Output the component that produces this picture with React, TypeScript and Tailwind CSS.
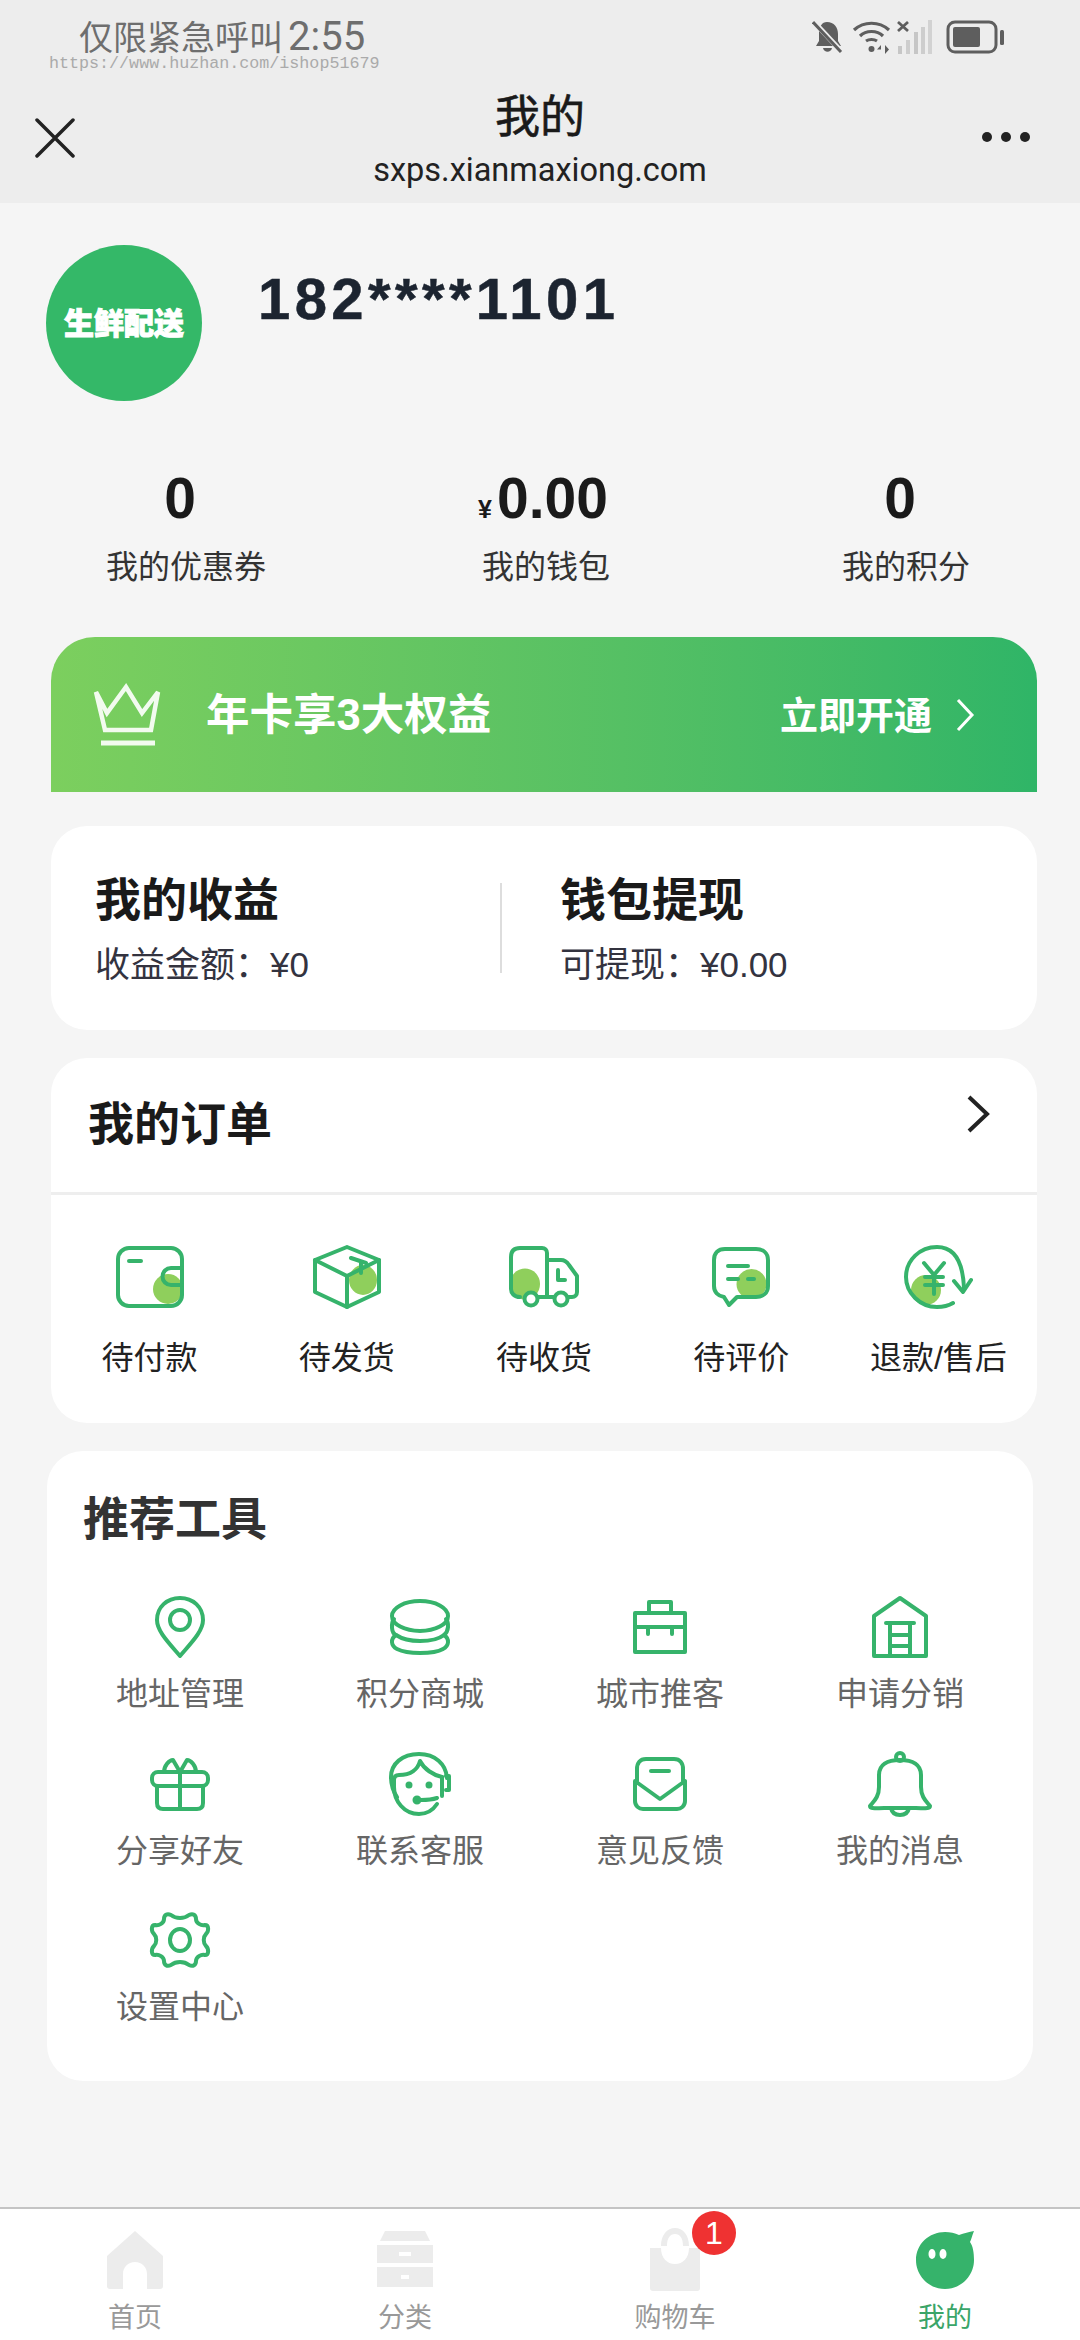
const G = "#36b36b";
const L = "#8fcf5c";
const CJK = "[font-family:'Liberation_Sans','Noto_Sans_CJK_SC',sans-serif]";

function Ic({ w, h, children }: { w: number; h: number; children: React.ReactNode }) {
  return (
    <svg width={w} height={h} viewBox={`0 0 ${w} ${h}`} fill="none" stroke={G} strokeWidth={4} strokeLinecap="round" strokeLinejoin="round">
      {children}
    </svg>
  );
}

const orderIcons = [
  <Ic w={68} h={62} key="a">
    <circle cx={52} cy={43} r={15} fill={L} stroke="none" />
    <rect x={2} y={2} width={64} height={58} rx={11} />
    <path d="M13 15H25" />
    <path d="M66 22H55a8.5 8.5 0 0 0 0 17H66" />
  </Ic>,
  <Ic w={70} h={64} key="b">
    <ellipse cx={51} cy={35} rx={14} ry={15} fill={L} stroke="none" />
    <path d="M35 2L67 15V47L35 62L3 47V15Z" />
    <path d="M3 15L35 31L67 15M35 31V62" />
    <path d="M39 13L54 18M49 17V28" />
  </Ic>,
  <Ic w={70} h={62} key="c">
    <ellipse cx={16} cy={38} rx={15} ry={15.5} fill={L} stroke="none" />
    <path d="M11 51C5 51 2 47 2 43V11C2 5 5 2 11 2H33C36 2 38 4 38 7V51M38 14H52C56 14 58 16 60 19L68 30V46C68 49 66 51 63 51H59M45 51H27" />
    <path d="M49 24V34H56" />
    <circle cx={22} cy={53} r={6.5} fill="#fff" />
    <circle cx={52} cy={53} r={6.5} fill="#fff" />
  </Ic>,
  <Ic w={58} h={60} key="d">
    <circle cx={39.5} cy={37} r={15} fill={L} stroke="none" />
    <path d="M13 2H44C51 2 56 6 56 13V39C56 46 51 50 44 50H25L17 58L12 50C6 49 2 45 2 39V13C2 6 6 2 13 2Z" />
    <path d="M16 19H36M16 32H26" />
    <path d="M36 32H42" />
  </Ic>,
  <Ic w={70} h={64} key="e">
    <circle cx={23} cy={45} r={15} fill={L} stroke="none" />
    <path d="M50 58C45 61 40 62 34 62C17 62 3 48 3 32C3 15 17 2 34 2C50 2 60 14 61 44" />
    <path d="M51 36L60 47L68 35" />
    <path d="M21 18L31 30L41 18M31 30V49M22 32H40M22 40H40" />
  </Ic>,
];

const toolIcons = [
  <Ic w={52} h={62} key="1">
    <path d="M26 60C14 46 3 35 3 24C3 11 13 2 26 2C39 2 49 11 49 24C49 35 38 46 26 60Z" />
    <circle cx={26} cy={24} r={10} />
  </Ic>,
  <Ic w={62} h={56} key="2">
    <ellipse cx={31} cy={17} rx={28} ry={15} />
    <path d="M5 20C2 24 2 34 7 36C13 40 23 42 31 42C40 42 50 40 55 36C60 32 60 24 57 20" />
    <path d="M7 36C1 40 2 47 8 50C14 53 22 54 31 54C40 54 49 53 54 50C60 47 61 40 55 36" />
  </Ic>,
  <Ic w={54} h={54} key="3">
    <path d="M16 13V2H38V13" />
    <rect x={2} y={13} width={50} height={39} />
    <path d="M2 27H52M15 27V34M39 27V34" />
  </Ic>,
  <Ic w={56} h={62} key="4">
    <path d="M2 20L28 2L54 20V60H2Z" />
    <path d="M14 27H42M18 27V60M38 27V60M18 39H38M18 50H38" />
  </Ic>,
  <Ic w={62} h={54} key="5">
    <rect x={3} y={15} width={56} height={14} rx={6} />
    <path d="M8 29V46C8 50 10 52 14 52H48C52 52 54 50 54 46V29M31 15V52" />
    <path d="M31 15L24 3C20 3 15 9 15 15M31 15L38 3C42 3 47 9 47 15" />
  </Ic>,
  <Ic w={62} h={64} key="6">
    <path d="M8 45C4 39 2 32 2 25C2 12 13 2 30 2C46 2 57 12 58 26" />
    <path d="M5 28C5 24 7 23 10 23C22 23 29 17 31 9C35 17 44 23 53 25" />
    <path d="M5 28V35C5 49 15 62 30 62C38 62 44 58 48 52" />
    <path d="M53 25V44M57 24H60V38H57" />
    <path d="M48 46C42 48 37 48 32 48" />
    <circle cx={28} cy={48} r={2.500} fill={G} />
    <circle cx={20} cy={33} r={1.500} fill={G} />
    <circle cx={40} cy={33} r={1.500} fill={G} />
  </Ic>,
  <Ic w={54} h={54} key="7">
    <path d="M4 24V12C4 6 7 2 13 2H41C47 2 50 6 50 12V24" />
    <path d="M2 24L27 42L52 24V44C52 49 48 52 44 52H10C6 52 2 49 2 44Z" />
    <path d="M18 14H36" />
  </Ic>,
  <Ic w={66} h={66} key="8">
    <path d="M3 55C7 50 12 46 12 36V24C12 14 20 9 33 9C46 9 54 14 54 24V36C54 46 59 50 63 55C63 58 60 57 33 57C6 57 3 58 3 55Z" />
    <circle cx={33} cy={6} r={4} />
    <path d="M24 57C25 62 29 64 33 64C37 64 41 62 42 57" />
  </Ic>,
  <Ic w={62} h={58} key="9">
    <path d="M22 4C27 8 35 8 40 4C44 2 47 4 47 8C47 12 52 15 56 14C60 14 60 20 57 23C54 26 54 32 57 35C60 38 60 44 56 44C52 43 47 46 47 50C47 54 44 56 40 54C35 50 27 50 22 54C18 56 15 54 15 50C15 46 10 43 6 44C2 44 2 38 5 35C8 32 8 26 5 23C2 20 2 14 6 14C10 15 15 12 15 8C15 4 18 2 22 4Z" />
    <ellipse cx={31} cy={29} rx={10} ry={11} />
  </Ic>,
];

const orders = ["待付款", "待发货", "待收货", "待评价", "退款/售后"];
const tools = ["地址管理", "积分商城", "城市推客", "申请分销", "分享好友", "联系客服", "意见反馈", "我的消息", "设置中心"];
const stats: [React.ReactNode, string][] = [
  ["0", "我的优惠券"],
  [<><span className="mr-[5px] text-[25px] leading-none">¥</span>0.00</>, "我的钱包"],
  ["0", "我的积分"],
];

function StatusIcons() {
  return (
    <div className="flex items-center gap-[7px] pr-[74px]">
      <svg width={33} height={34} viewBox="0 0 33 34" fill="#5e5e5e">
        <path d="M15 2C22 2 26 7 26 14V21L29 26H4L7 21V12C7 7 10 2 15 2Z" />
        <path d="M11 28H20C19 33 12 33 11 28Z" />
        <path d="M2 2L30 32" stroke="#ededed" strokeWidth={5} />
        <path d="M1 2L29 32" stroke="#5e5e5e" strokeWidth={3} />
      </svg>
      <svg width={40} height={34} viewBox="0 0 40 34" fill="none" stroke="#5e5e5e" strokeWidth={3.2}>
        <path d="M2 10C12 1 27 1 37 10M8 16C14 10 25 10 31 16M14 21C17 19 22 19 25 21" />
        <circle cx={19.500} cy={29} r={3} fill="#5e5e5e" stroke="none" />
        <path d="M29 25L25 29.500H29V34ZM33 25V34L37 29.500Z" fill="#5e5e5e" stroke="none" />
      </svg>
      <svg width={36} height={36} viewBox="0 0 36 36" className="-ml-[2px]">
        <path d="M1 3L11 12M11 3L1 12" stroke="#5e5e5e" strokeWidth={2.8} />
        <rect x={1} y={27} width={4} height={8} fill="#c6c6c6" />
        <rect x={9} y={21} width={4} height={14} fill="#cdcdcd" />
        <rect x={17} y={13} width={4} height={22} fill="#c6c6c6" />
        <rect x={24} y={8} width={4} height={27} fill="#cdcdcd" />
        <rect x={31} y={1} width={4} height={34} fill="#d2d2d2" />
      </svg>
      <svg width={60} height={34} viewBox="0 0 60 34" className="ml-[6px]">
        <rect x={2} y={2} width={48} height={30} rx={7} fill="none" stroke="#5e5e5e" strokeWidth={3} />
        <rect x={7} y={7} width={27} height={20} rx={2} fill="#5e5e5e" />
        <rect x={54} y={10} width={4} height={15} rx={1.500} fill="#5e5e5e" />
      </svg>
    </div>
  );
}

export default function App() {
  return (
    <div className={`relative flex h-[2340px] w-[1080px] flex-col overflow-hidden bg-[#f5f5f5] ${CJK}`}>
      <header className="flex h-[203px] flex-col bg-[#ededed]">
        <div className="flex h-[72px] items-center justify-between pt-[2px]">
          <div className="pl-[79px] text-[34px] leading-none text-[#6e6e6e]">
            仅限紧急呼叫<span className="ml-[5px] font-['Roboto'] text-[40px] font-normal leading-none">2:55</span>
          </div>
          <StatusIcons />
        </div>
        <div className="relative flex flex-1 flex-col items-center pt-[20px]">
          <div className="text-[45px] leading-[52px] text-[#1a1a1a] [-webkit-text-stroke:0.6px_#1a1a1a]">我的</div>
          <div className="mt-[7px] font-['Roboto'] text-[32.5px] leading-[38px] text-[#222]">sxps.xianmaxiong.com</div>
          <svg width={40} height={40} viewBox="0 0 40 40" className="absolute left-[35px] top-[46px]" stroke="#222" strokeWidth={3.500} strokeLinecap="round">
            <path d="M2 2L38 38M38 2L2 38" />
          </svg>
          <div className="absolute right-[50px] top-[60px] flex gap-[9px]">
            <span className="h-[10px] w-[10px] rounded-full bg-[#222]" />
            <span className="h-[10px] w-[10px] rounded-full bg-[#222]" />
            <span className="h-[10px] w-[10px] rounded-full bg-[#222]" />
          </div>
        </div>
      </header>
      <div className="absolute left-[49px] top-[57px] font-['Liberation_Mono'] text-[16.7px] leading-[14px] text-[#aaa]">https://www.huzhan.com/ishop51679</div>

      <main className="flex flex-1 flex-col">
        <section className="flex items-start pl-[46px] pt-[42px]">
          <div className="flex h-[156px] w-[156px] items-center justify-center rounded-full bg-[#34b868] text-[30px] font-black text-white [-webkit-text-stroke:1px_#fff]">生鲜配送</div>
          <div className="ml-[56px] mt-[24px] text-[58px] font-bold leading-[60px] tracking-[4.4px] text-[#1c2430] [-webkit-text-stroke:0.5px_#1c2430]">182****1101</div>
        </section>

        <section className="ml-[6px] mt-[67px] grid w-[1080px] shrink-0 grid-cols-3">
          {stats.map(([v, l], i) => (
            <div key={l} className="flex flex-col items-center">
              <div className={`h-[60px] text-[57px] font-bold leading-[60px] text-[#1a1a1a] ${i === 1 ? "-ml-[6px]" : "-ml-[12px]"}`}>{v}</div>
              <div className="mt-[19px] text-[32px] leading-[40px] text-[#333]">{l}</div>
            </div>
          ))}
        </section>

        <section className="ml-[51px] mr-[43px] mt-[50px] flex h-[155px] items-center justify-between rounded-t-[44px] bg-gradient-to-r from-[#7ccf5e] to-[#2fb567] pl-[42px] pr-[62px]">
          <div className="flex items-center">
            <svg width={68} height={66} viewBox="0 0 68 66" fill="none" stroke="#f2fbef" strokeWidth={4.5}>
              <path d="M3 10L14 31L33 5L49 31L65 10L58 48H12Z" />
              <path d="M8 61H62" strokeWidth={5} />
            </svg>
            <div className="ml-[45px] pt-[2px] text-[43.5px] font-bold leading-none text-white">年卡享3大权益</div>
          </div>
          <div className="flex items-center">
            <div className="pt-[2px] text-[38px] font-bold leading-none text-white">立即开通</div>
            <svg width={20} height={34} viewBox="0 0 20 34" fill="none" stroke="#fff" strokeWidth={3} className="ml-[23px]">
              <path d="M3 2L17 17L3 32" />
            </svg>
          </div>
        </section>

        <section className="ml-[51px] mr-[43px] mt-[34px] flex h-[204px] items-center rounded-[36px] bg-white">
          <div className="w-[449px] pl-[44px] pt-[2px]">
            <div className="text-[46px] font-bold leading-[54px] text-[#1a1a1a]">我的收益</div>
            <div className="mt-[17px] text-[35px] leading-[42px] text-[#33333f]">收益金额：¥0</div>
          </div>
          <div className="h-[90px] w-[2px] bg-[#ddd]" />
          <div className="pl-[58px] pt-[2px]">
            <div className="text-[46px] font-bold leading-[54px] text-[#1a1a1a]">钱包提现</div>
            <div className="mt-[17px] text-[35px] leading-[42px] text-[#33333f]">可提现：¥0.00</div>
          </div>
        </section>

        <section className="ml-[51px] mr-[43px] mt-[28px] flex h-[365px] flex-col rounded-[36px] bg-white">
          <div className="flex h-[137px] items-center justify-between border-b-[3px] border-[#eee] pb-[3px] pl-[37px] pr-[47px]">
            <div className="text-[46px] font-bold leading-[54px] text-[#1a1a1a]">我的订单</div>
            <svg width={24} height={38} viewBox="0 0 24 38" fill="none" stroke="#222" strokeWidth={4} className="-mt-[20px]">
              <path d="M3 2L21 19L3 36" />
            </svg>
          </div>
          <div className="grid grid-cols-5 pt-[50px]">
            {orders.map((t, i) => (
              <div key={t} className="flex flex-col items-center">
                <div className="flex h-[64px] items-center">{orderIcons[i]}</div>
                <div className="mt-[27px] text-[32px] leading-[44px] text-[#222]">{t}</div>
              </div>
            ))}
          </div>
        </section>

        <section className="mx-[47px] mt-[28px] h-[630px] rounded-[36px] bg-white px-[13px]">
          <div className="pl-[23px] pt-[41px] text-[46px] font-bold leading-[54px] text-[#333]">推荐工具</div>
          <div className="mt-[48px] grid grid-cols-4 gap-y-[1px]">
            {tools.map((t, i) => (
              <div key={t} className="flex h-[155.5px] flex-col items-center">
                <div className="flex h-[66px] items-center justify-center">{toolIcons[i]}</div>
                <div className="mt-[12px] text-[32px] leading-[44px] text-[#666]">{t}</div>
              </div>
            ))}
          </div>
        </section>
      </main>

      <nav className="grid h-[133px] grid-cols-4 border-t-2 border-[#c4c4c4] bg-white">
        <div className="flex flex-col items-center">
          <svg width={60} height={60} viewBox="0 0 60 60" className="mt-[21px]" fill="#ececec">
            <path fillRule="evenodd" d="M30 1L58 26V56C58 58 57 59 55 59H42V44C42 37 37 32 30 32C23 32 18 37 18 44V59H5C3 59 2 58 2 56V26Z" />
          </svg>
          <div className="mt-[10px] text-[27px] leading-[36px] text-[#999]">首页</div>
        </div>
        <div className="flex flex-col items-center">
          <svg width={60} height={60} viewBox="0 0 60 60" className="mt-[21px]" fill="#ececec">
            <path d="M10 1H50L55 11H5Z" />
            <path fillRule="evenodd" d="M2 15H58V33H2ZM24 22V26H36V22Z" />
            <path fillRule="evenodd" d="M2 37H58V57H2ZM26 45V49H34V45Z" />
          </svg>
          <div className="mt-[10px] text-[27px] leading-[36px] text-[#999]">分类</div>
        </div>
        <div className="relative flex flex-col items-center">
          <svg width={54} height={66} viewBox="0 0 54 66" className="mt-[17px]" fill="#ececec">
            <path fillRule="evenodd" d="M2 22H13C13 32 19 38 27 38C35 38 41 32 41 22H52V62C52 64 51 65 49 65H5C3 65 2 64 2 62ZM13 20C13 9 19 2 27 2C35 2 41 9 41 20H35C35 12 32 8 27 8C22 8 19 12 19 20Z" />
          </svg>
          <div className="mt-[8px] text-[27px] leading-[36px] text-[#999]">购物车</div>
          <div className="absolute left-[152px] top-[2px] flex h-[44px] w-[44px] items-center justify-center rounded-full bg-[#ef3232] text-[32px] leading-none text-white">1</div>
        </div>
        <div className="flex flex-col items-center">
          <svg width={60} height={60} viewBox="0 0 60 60" className="mt-[21px]" fill={G}>
            <path d="M30 2C35 2 40 3 44 5C49 3 54 2 59 1C57 6 56 10 55 12C58 16 59 23 59 30C59 46 46 59 30 59C14 59 1 46 1 30C1 14 14 2 30 2Z" />
            <ellipse cx={17} cy={24} rx={3.5} ry={5} fill="#fff" />
            <ellipse cx={28} cy={24} rx={3.5} ry={5} fill="#fff" />
          </svg>
          <div className="mt-[10px] text-[27px] leading-[36px] text-[#3aa568]">我的</div>
        </div>
      </nav>
    </div>
  );
}
